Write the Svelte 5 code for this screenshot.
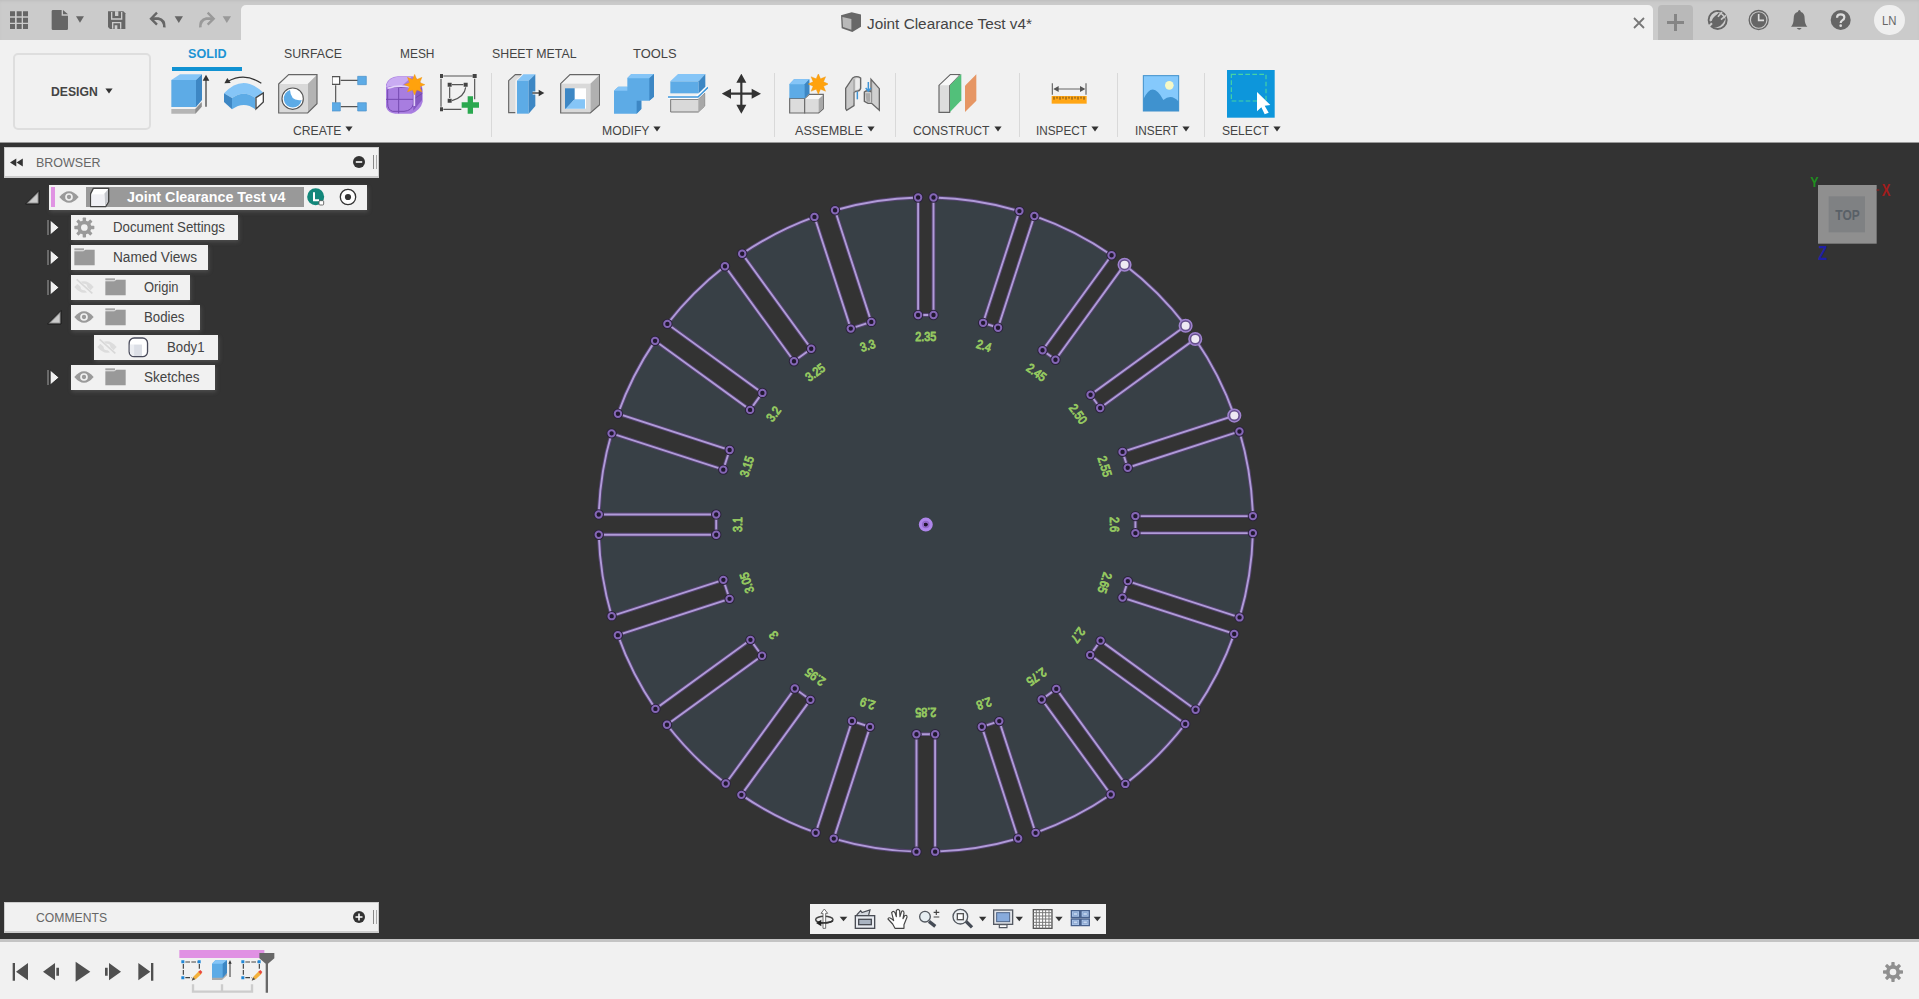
<script>
  // Sketch geometry, in canvas pixels
  const CX = 925.8, CY = 524.6, R = 327.2, INNER = 209.6, SCALE = 6.55;
  const labels = ['2.35', '2.4', '2.45', '2.50', '2.55', '2.6', '2.65', '2.7', '2.75', '2.8',
    '2.85', '2.9', '2.95', '3', '3.05', '3.1', '3.15', '3.2', '3.25', '3.3'];

  function at(deg, x, y) {
    const a = (deg * Math.PI) / 180;
    return [CX + x * Math.cos(a) + y * Math.sin(a), CY + x * Math.sin(a) - y * Math.cos(a)];
  }

  const slots = labels.map((label, i) => {
    const deg = i * 18;
    const h = (parseFloat(label) * SCALE) / 2;
    const top = Math.sqrt(R * R - h * h);
    return {
      label, deg,
      pts: [at(deg, -h, top), at(deg, -h, INNER), at(deg, h, INNER), at(deg, h, top)],
      text: at(deg, 0, 188.3)
    };
  });

  const p = (q) => q[0].toFixed(2) + ' ' + q[1].toFixed(2);
  let outline = 'M' + p(slots[0].pts[0]);
  slots.forEach((s, i) => {
    const next = slots[(i + 1) % slots.length];
    outline += ` L${p(s.pts[1])} L${p(s.pts[2])} L${p(s.pts[3])} A${R} ${R} 0 0 1 ${p(next.pts[0])}`;
  });
  outline += 'Z';

  const picked = [[2, 3], [3, 0], [3, 3], [4, 0]];
  const isPicked = (i, j) => picked.some(([a, b]) => a === i && b === j);
  const points = slots.flatMap((s, i) => s.pts.map((q, j) => ({ q, on: isPicked(i, j) })));

  const dimWidth = { 4: 21, 3: 15, 1: 6.5 };

  const tabs = [
    { s: 'SOLID', w: 38.5, pad: 16 }, { s: 'SURFACE', w: 58, pad: 42 }, { s: 'MESH', w: 34.5, pad: 58 },
    { s: 'SHEET METAL', w: 84.5, pad: 57 }, { s: 'TOOLS', w: 43.5, pad: 56.5 }
  ];

  const groups = [
    { s: 'CREATE', w: 48.5, size: 329, left: 0, icons: ['extrude', 'revolve', 'hole', 'pattern', 'form', 'sketch'] },
    { s: 'MODIFY', w: 47.5, size: 283, left: 7, icons: ['press', 'shell', 'combine', 'split', 'move'] },
    { s: 'ASSEMBLE', w: 68, size: 121, left: 0, icons: ['component', 'joint'] },
    { s: 'CONSTRUCT', w: 76.5, size: 124, left: 0, icons: ['plane'] },
    { s: 'INSPECT', w: 51, size: 98, left: 0, icons: ['measure'] },
    { s: 'INSERT', w: 43, size: 87, left: 0, icons: ['image'] },
    { s: 'SELECT', w: 47, size: 92, left: 0, icons: ['select'] }
  ];

  const rows = [
    { s: 'Document Settings', w: 112, ind: 46.8, size: 167.7, open: false, icons: ['gear'] },
    { s: 'Named Views', w: 84, ind: 46.8, size: 137.7, open: false, icons: ['folder'] },
    { s: 'Origin', w: 34.5, ind: 46.8, size: 119, open: false, icons: ['hidden', 'folder'] },
    { s: 'Bodies', w: 40.5, ind: 46.8, size: 129, open: true, icons: ['eye', 'folder'] },
    { s: 'Body1', w: 37.5, ind: 69.6, size: 124, open: null, icons: ['hidden', 'body'] },
    { s: 'Sketches', w: 55.5, ind: 46.8, size: 144.2, open: false, icons: ['eye', 'folder'] }
  ];

  const star = (cx, cy, ro, ri, n) => Array.from({ length: n * 2 }, (_, k) => {
    const a = (k * Math.PI) / n - Math.PI / 2, r = k % 2 ? ri : ro;
    return (cx + r * Math.cos(a)).toFixed(1) + ',' + (cy + r * Math.sin(a)).toFixed(1);
  }).join(' ');
</script>

{#snippet txt(s, w, size, cls)}
  <svg class="t {cls}" width={w} height="18">
    <text x="0" y={9 + size * 0.36} font-size={size} textLength={w} lengthAdjust="spacingAndGlyphs">{s}</text>
  </svg>
{/snippet}

{#snippet caret()}
  <svg class="caret" width="8" height="6" viewBox="0 0 8 6"><path d="M.4 .5H7.6L4 5.6Z" fill="#333" /></svg>
{/snippet}

{#snippet gearShape(fill)}
  <g transform="translate(256 261)" {fill}>
    {#each [0, 45, 90, 135, 180, 225, 270, 315] as a}
      <rect x="-5" y="-30" width="10" height="14" rx="2" transform="rotate({a})" />
    {/each}
    <path fill-rule="evenodd" d="M-21 0A21 21 0 1 1 21 0A21 21 0 1 1-21 0ZM-10 0A10 10 0 1 0 10 0A10 10 0 1 0-10 0Z" />
  </g>
{/snippet}

{#snippet tool(n)}
  {#if n === 'extrude'}
    <svg class="i40" viewBox="510 222 120 120">
      <path d="M514 327H586L605 308V320L586 341H514Z" fill="#b5b5b5" /><path d="M586 327L605 306V320L586 341Z" fill="#8d8d8d" />
      <path d="M514 240L540 223H606L588 240Z" fill="#85c5f7" /><path d="M514 240H588V321H514Z" fill="#5dabe6" />
      <path d="M588 240L606 223V300L588 321Z" fill="#3d87c4" />
      <path d="M618 320V234" stroke="#333" stroke-width="3.5" /><path d="M618 224L628 242H608Z" fill="#333" />
    </svg>
  {:else if n === 'revolve'}
    <svg class="i40" viewBox="672 222 120 120">
      <path d="M672 280Q730 218 792 280L766 294Q732 268 696 294Z" fill="#85c5f7" />
      <path d="M672 280L696 294V328L672 306Z" fill="#3d87c4" /><path d="M696 294Q732 268 766 294V328Q732 302 696 328Z" fill="#5dabe6" />
      <path d="M768 293L790 279V306L768 327Z" fill="#fff" stroke="#444" stroke-width="4" />
      <path d="M684 244Q734 216 784 250" fill="none" stroke="#333" stroke-width="3.5" /><path d="M673 250L682 234L692 249Z" fill="#333" />
    </svg>
  {:else if n === 'hole'}
    <svg class="i40" viewBox="834 222 120 120">
      <path d="M836 252L866 224H951L923 252Z" fill="#f4f4f4" /><path d="M923 252L951 224V311L923 339Z" fill="#b3b3b3" />
      <path d="M836 252H923V339H836Z" fill="#d9d9d9" />
      <path d="M836 252L866 224H951V311L923 339H836Z" fill="none" stroke="#666" stroke-width="3.5" />
      <circle cx="878" cy="296" r="32" fill="#fff" stroke="#555" stroke-width="3.5" />
      <path d="M870 270A27 27 0 1 0 905 300Q872 305 870 270Z" fill="#5dabe6" />
    </svg>
  {:else if n === 'pattern'}
    <svg class="i40" viewBox="996 222 120 120">
      <path d="M1022 241H1074M1007 256V308M1022 320H1074" stroke="#555" stroke-width="3.5" />
      <rect x="996" y="230" width="23" height="23" fill="#fff" stroke="#444" stroke-width="3.5" />
      <path d="M1073 229H1099V254H1073ZM994 308H1021V333H994ZM1073 308H1099V333H1073Z" fill="#5dabe6" stroke="#4a90c8" stroke-width="2" />
    </svg>
  {:else if n === 'form'}
    <svg class="i40" viewBox="1158 222 120 120">
      <path d="M1156 262Q1160 232 1194 229H1238Q1266 240 1268 270V305Q1262 330 1234 341H1186Q1158 338 1156 310Z" fill="#a87de0" />
      <path d="M1158 262Q1162 233 1194 230H1236Q1220 244 1204 259H1170Z" fill="#c9abf2" />
      <path d="M1240 275L1266 262V300L1240 332Z" fill="#8559c2" />
      <path d="M1157 298H1240L1267 280M1196 259V340M1168 262H1240V312Q1236 332 1212 334H1178Q1163 330 1163 310V270Z" fill="none" stroke="#7549b0" stroke-width="3" />
      <path d="M1163 265Q1200 252 1243 264V318" fill="none" stroke="#e3d3fa" stroke-width="5" />
      <polygon points={star(1244, 254, 31, 17, 8)} fill="#ffa20d" stroke="#e69312" stroke-width="1" />
    </svg>
  {:else if n === 'sketch'}
    <svg class="i40" viewBox="1320 222 120 120">
      <path d="M1330 228H1418M1323 236V320M1424 236V298M1330 328H1384M1349 262V294M1356 254H1390M1397 262Q1394 290 1356 302" fill="none" stroke="#555" stroke-width="3.5" />
      <path d="M1317 222h12v12h-12zM1418 222h12v12h-12zM1317 322h12v12h-12zM1343 248h12v12h-12zM1391 248h12v12h-12zM1343 296h12v12h-12z" fill="#444" />
      <path d="M1403 289H1419V307H1437V323H1419V341H1403V323H1385V307H1403Z" fill="#2aa84f" />
    </svg>
  {:else if n === 'press'}
    <svg class="i40" viewBox="78 102 120 120">
      <path d="M86 122L106 104H126L112 122V218H86Z" fill="#ddd" stroke="#666" stroke-width="3.5" />
      <path d="M106 222V122L128 100H136V222Z" fill="#f1f1f1" />
      <path d="M111 122L130 103H166L146 122Z" fill="#85c5f7" /><path d="M111 122H146V221H111Z" fill="#5dabe6" /><path d="M146 122L166 103V198L146 221Z" fill="#3d87c4" />
      <path d="M158 159H178" stroke="#fff" stroke-width="9" /><path d="M157 159H182" stroke="#333" stroke-width="4" /><path d="M176 149L193 159L176 169Z" fill="#333" />
    </svg>
  {:else if n === 'shell'}
    <svg class="i40" viewBox="240 102 120 120">
      <path d="M242 131L270 104H359L331 131Z" fill="#f4f4f4" /><path d="M331 131L359 104V194L331 219Z" fill="#b0b0b0" />
      <path d="M242 131H331V219H242Z" fill="#d9d9d9" /><path d="M242 131L270 104H359V194L331 219H242Z" fill="none" stroke="#666" stroke-width="3.5" />
      <path d="M255 145H318V206H255Z" fill="#fff" /><path d="M255 145H284V178L258 206H255Z" fill="#3d87c4" /><path d="M284 178H315V206H257Z" fill="#85c5f7" />
    </svg>
  {:else if n === 'combine'}
    <svg class="i40" viewBox="402 102 120 120">
      <path d="M402 152L415 140H442V114L454 102H522V170L508 182H484V207L470 221H402Z" fill="#5dabe6" />
      <path d="M402 152L415 140H442V152ZM442 115L454 102H522L508 115Z" fill="#85c5f7" />
      <path d="M508 115L522 102V170L508 182ZM470 182H484V207L470 221Z" fill="#3d87c4" />
    </svg>
  {:else if n === 'split'}
    <svg class="i40" viewBox="564 102 120 120">
      <path d="M572 178H655L674 160V198L655 216H572Z" fill="#d9d9d9" stroke="#777" stroke-width="3" /><path d="M655 178L674 160V198L655 216Z" fill="#a8a8a8" />
      <path d="M562 172H650L684 142" fill="none" stroke="#fff" stroke-width="10" />
      <path d="M571 124L594 102H676L656 124Z" fill="#85c5f7" /><path d="M571 124H656V160H571Z" fill="#5dabe6" /><path d="M656 124L676 102V140L656 160Z" fill="#3d87c4" />
      <path d="M562 171H654L684 142" fill="none" stroke="#3f97db" stroke-width="4.5" />
    </svg>
  {:else if n === 'move'}
    <svg class="i40" viewBox="726 102 120 120">
      <path d="M784 125V197M748 161H820" stroke="#333" stroke-width="6.5" />
      <path d="M784 101L799 128H769ZM784 221L769 194H799ZM725 161L753 146V176ZM843 161L815 176V146Z" fill="#333" />
    </svg>
  {:else if n === 'component'}
    <svg class="i40" viewBox="924 102 120 120">
      <path d="M929 175H974V219H929Z" fill="#dcdcdc" stroke="#6b6b6b" stroke-width="3.5" />
      <path d="M974 176L988 163H1030V206L1016 219H974Z" fill="#dcdcdc" stroke="#6b6b6b" stroke-width="3.5" />
      <path d="M976 177L989 165H1028L1016 177Z" fill="#f7f7f7" /><path d="M1016 178L1029 166V205L1016 217Z" fill="#a9a9a9" />
      <path d="M928 133L942 118H988V160L974 175H928Z" fill="#5dabe6" /><path d="M928 133L942 118H988L974 133Z" fill="#85c5f7" /><path d="M974 133L988 118V160L974 175Z" fill="#3d87c4" />
      <polygon points={star(1015, 132, 31, 17, 8)} fill="#ffa20d" stroke="#e69312" stroke-width="1" />
    </svg>
  {:else if n === 'joint'}
    <svg class="i40" viewBox="1086 102 120 120">
      <path d="M1097 145L1118 114Q1130 106 1142 114V145Q1140 154 1127 154L1122 158V197L1100 211L1097 206Z" fill="#c9c9c9" stroke="#666" stroke-width="4" />
      <path d="M1122 118V190" stroke="#999" stroke-width="3" /><path d="M1126 116Q1132 112 1139 116V143Q1134 151 1126 150Z" fill="#ececec" />
      <path d="M1132 155V178" fill="none" stroke="#4095d6" stroke-width="4.5" />
      <path d="M1153 156Q1162 149 1173 155V118L1198 146V211L1175 190H1164L1153 184Z" fill="#d0d0d0" stroke="#666" stroke-width="4" />
      <path d="M1175 126V188" stroke="#888" stroke-width="3" /><path d="M1156 160H1170V185H1160Z" fill="#aaa" />
      <path d="M1165 126V150M1157 144L1165 153L1173 144" fill="none" stroke="#4095d6" stroke-width="4.5" />
    </svg>
  {:else if n === 'plane'}
    <svg class="i40" viewBox="475 222 120 120">
      <path d="M478 256L512 224H540L510 256V337H478Z" fill="#dcdcdc" stroke="#666" stroke-width="3.5" /><path d="M481 256L513 226H538L509 256Z" fill="#f8f8f8" />
      <path d="M511 256L545 222V301L511 336Z" fill="#52c07a" /><path d="M556 257L590 223V302L556 336Z" fill="#e69664" />
    </svg>
  {:else if n === 'measure'}
    <svg class="i40" viewBox="807 222 120 120">
      <path d="M817 250V284M918 250V284M824 267H912" stroke="#666" stroke-width="3.5" /><path d="M820 267L836 258V276ZM916 267L900 276V258Z" fill="#555" />
      <rect x="815" y="288" width="105" height="23" fill="#ffa615" />
      <path d="M822 290v9M831 290v6M840 290v9M849 290v6M858 290v9M867 290v6M876 290v9M885 290v6M894 290v9M903 290v6M912 290v9" stroke="#6b4a14" stroke-width="3" />
    </svg>
  {:else if n === 'image'}
    <svg class="i40" viewBox="1083 222 120 120">
      <rect x="1090" y="227" width="106" height="106" fill="#85c9fc" stroke="#3f8fcb" stroke-width="3" />
      <path d="M1090 298Q1118 238 1150 300Q1174 280 1196 305V333H1090Z" fill="#3f92cf" /><circle cx="1168" cy="256" r="13" fill="#f5f8c6" />
    </svg>
  {:else}
    <svg class="i48" viewBox="1343 210 143 143">
      <rect x="1343" y="210" width="143" height="143" fill="#0d96db" />
      <rect x="1356" y="223" width="104" height="80" fill="none" stroke="#46d3a4" stroke-width="3.5" stroke-dasharray="14 7" />
      <path d="M1433 276L1473 315L1456 317L1468 338L1456 343L1446 322L1433 334Z" fill="#fff" />
    </svg>
  {/if}
{/snippet}

{#snippet eye()}
  <svg width="20" height="18" viewBox="226 234 60 54">
    <path d="M227 261Q256 226 285 261Q256 296 227 261Z" fill="#9a9a9a" /><circle cx="256" cy="261" r="11.5" fill="#f1f1f1" /><circle cx="256" cy="261" r="6.5" fill="#9a9a9a" />
  </svg>
{/snippet}

{#snippet rowIcon(n)}
  {#if n === 'gear'}
    <svg width="20.7" height="21" viewBox="225 230 62 62">{@render gearShape('#9a9a9a')}</svg>
  {:else if n === 'folder'}
    <svg width="20.7" height="20" viewBox="318 411 62 60"><path d="M319 424H346L352 419H380V466H319Z" fill="#999" /><rect x="319" y="415" width="29" height="6" fill="#a5a5a5" /></svg>
  {:else if n === 'eye'}
    {@render eye()}
  {:else if n === 'hidden'}
    <svg width="20" height="18" viewBox="226 414 60 54">
      <path d="M227 441Q256 406 285 441Q256 476 227 441Z" fill="#dcdcdc" /><circle cx="256" cy="441" r="10" fill="#f1f1f1" />
      <path d="M232 420L280 462" stroke="#f1f1f1" stroke-width="12" /><path d="M234 418L281 460" stroke="#d8d8d8" stroke-width="5" />
    </svg>
  {:else}
    <svg width="20.7" height="21" viewBox="386 589 62 64">
      <rect x="389" y="592" width="56" height="57" rx="15" fill="#fff" stroke="#4a4c5c" stroke-width="4" />
      <path d="M391 612H404V646H398Q391 642 391 634Z" fill="#eceef2" /><path d="M404 612H428V647H404Z" fill="#dcdfe6" />
    </svg>
  {/if}
{/snippet}

<div class="app">
  <header class="titlebar">
    <div class="quick">
      <svg width="36.7" height="40" viewBox="0 0 110 120"><path d="M30 34h15v15h-15zM50 34h15v15h-15zM69 34h15v15h-15zM30 53h15v15h-15zM50 53h15v15h-15zM69 53h15v15h-15zM30 72h15v15h-15zM50 72h15v15h-15zM69 72h15v15h-15z" fill="#666" /></svg>
      <svg width="53.3" height="40" viewBox="110 0 160 120"><path d="M154 34Q154 30 158 30H184V47H203V86Q203 90 199 90H158Q154 90 154 86ZM188 30L203 43H188Z" fill="#666" /><path d="M227 49H251L239 68Z" fill="#666" /></svg>
      <svg width="46.7" height="40" viewBox="270 0 140 120"><path d="M324 34H370L376 40V87H330L324 81Z" fill="#666" /><path d="M335 36V57H365V36M338 86V68H362V86" fill="none" stroke="#ccc" stroke-width="4" /><path d="M345 34H355V48H345ZM344 76H352V87H344Z" fill="#ccc" /></svg>
      <svg width="53.3" height="40" viewBox="410 0 160 120"><path d="M453 56H474Q493 60 492 82" fill="none" stroke="#666" stroke-width="8" /><path d="M470 38L452 56L470 74" fill="none" stroke="#666" stroke-width="7" /><path d="M523 49H548L535.5 69Z" fill="#666" /></svg>
      <svg width="50" height="40" viewBox="570 0 150 120"><path d="M640 56H619Q600 60 601 82" fill="none" stroke="#999" stroke-width="8" /><path d="M623 38L641 56L623 74" fill="none" stroke="#999" stroke-width="7" /><path d="M668 49H693L680.5 69Z" fill="#999" /></svg>
    </div>
    <div class="doctab">
      <svg class="docicon" width="20.7" height="20" viewBox="183 37 62 60"><path d="M183 47L215 38L245 45V80L217 97L185 86Z" fill="#686868" /><path d="M187 52L214 58V90L189 82Z" fill="#b9b9b9" /></svg>
      {@render txt('Joint Clearance Test v4*', 165, 15.5, 'dark title')}
      <svg class="close" width="12" height="12" viewBox="0 0 12 12"><path d="M1 1L11 11M11 1L1 11" stroke="#777" stroke-width="1.8" /></svg>
    </div>
    <div class="plus"><svg width="17" height="17" viewBox="0 0 17 17"><path d="M8.5 0V17M0 8.5H17" stroke="#858585" stroke-width="3" /></svg></div>
    <div class="status">
      <svg width="38.3" height="40" viewBox="300 0 115 120">
        <circle cx="353" cy="60" r="27" fill="none" stroke="#666" stroke-width="6" /><path d="M340 84Q324 74 334 58L356 38Q368 44 376 58Q364 84 340 84Z" fill="#666" />
        <path d="M354 50L366 36M363 59L378 46" stroke="#ccc" stroke-width="5" /><path d="M322 84L336 70" stroke="#ccc" stroke-width="6" /><path d="M332 62Q336 46 352 38" fill="none" stroke="#ccc" stroke-width="7" />
      </svg>
      <svg width="41.7" height="40" viewBox="415 0 125 120"><circle cx="477" cy="60" r="28.5" fill="none" stroke="#666" stroke-width="4" /><circle cx="477" cy="60" r="23" fill="#666" /><path d="M477 42V61H493" fill="none" stroke="#ddd" stroke-width="5" /></svg>
      <svg width="40" height="40" viewBox="540 0 120 120"><path d="M576 80Q584 72 584 56Q584 38 596 36Q601 24 606 36Q617 39 617 56Q617 72 625 80Z" fill="#666" /><path d="M593 84H608Q601 94 593 84Z" fill="#666" /></svg>
      <svg width="41.7" height="40" viewBox="660 0 125 120"><circle cx="725" cy="60" r="30" fill="#666" /><path d="M714 53Q714 43 725 43Q736 43 736 52Q736 58 730 61Q725 64 725 69" fill="none" stroke="#ddd" stroke-width="6.5" /><circle cx="725" cy="77" r="4" fill="#ddd" /></svg>
      <div class="avatar">{@render txt('LN', 14.5, 13.5, 'mid')}</div>
    </div>
  </header>

  <section class="ribbon">
    <div class="design">{@render txt('DESIGN', 46.7, 13.5, 'dark bold')}{@render caret()}</div>
    <div class="work">
      <nav class="tabs">
        {#each tabs as tab, i}
          <div class="tab" class:active={i === 0} style:padding-left="{tab.pad}px">{@render txt(tab.s, tab.w, 13.5, i ? 'dark' : 'blue bold')}</div>
        {/each}
      </nav>
      <div class="groups">
        {#each groups as g}
          <div class="group {g.s.toLowerCase()}" class:wide={g.icons.length > 2} style:width="{g.size}px" style:padding-left="{g.left}px">
            <div class="icons">
              {#each g.icons as n}<div class="cell">{@render tool(n)}</div>{/each}
            </div>
            <div class="glabel">{@render txt(g.s, g.w, 13.5, 'dark')}{@render caret()}</div>
          </div>
        {/each}
      </div>
    </div>
  </section>

  <main class="view">
    <svg class="canvas" viewBox="0 143 1919 796">
      <path d={outline} fill="#384046" stroke="#54436f" stroke-width="3.8" />
      <path d={outline} fill="none" stroke="#b09bd8" stroke-width="1.9" />
      {#each points as pt}
        {#if pt.on}
          <circle cx={pt.q[0]} cy={pt.q[1]} r="6.3" fill="#65508c" stroke="#a083cf" stroke-width="1.5" /><circle cx={pt.q[0]} cy={pt.q[1]} r="4" fill="#eeeaf3" />
        {:else}
          <circle cx={pt.q[0]} cy={pt.q[1]} r="5.2" fill="#2b223b" /><circle cx={pt.q[0]} cy={pt.q[1]} r="3.2" fill="#211830" stroke="#8466b5" stroke-width="2" />
        {/if}
      {/each}
      <circle cx={CX} cy={CY} r="4.6" fill="#21152f" stroke="#ae85ea" stroke-width="4.8" /><circle cx={CX} cy={CY} r="3" fill="none" stroke="#9168c8" stroke-width="1.5" />
      {#each slots as s}
        <text class="dim" x="0" y="4.4" transform="translate({s.text[0]} {s.text[1]}) rotate({s.deg})" textLength={dimWidth[s.label.length]} lengthAdjust="spacingAndGlyphs">{s.label}</text>
      {/each}
    </svg>

    <aside class="browser">
      <div class="panel-head">
        <svg width="13" height="9" viewBox="0 0 13 9"><path d="M6.3 .5V8.5L0 4.5ZM12.8 .5V8.5L6.5 4.5Z" fill="#333" /></svg>
        {@render txt('BROWSER', 64.5, 13.5, 'mid')}
        <svg class="knob" width="12" height="12" viewBox="0 0 12 12"><circle cx="6" cy="6" r="6" fill="#333" /><path d="M2.8 6H9.2" stroke="#fff" stroke-width="1.6" /></svg>
        <i class="grip"></i>
      </div>
      <div class="row root" style:padding-left="25px">
        <div class="arrow"><svg width="15" height="15" viewBox="0 0 15 15"><path d="M14 .5V14H.5Z" fill="#999" stroke="#191919" /><path d="M12.5 4V12.5H4Z" fill="#ccc" /></svg></div>
        <div class="chip" style:width="317.6px">
          <i class="pink"></i>
          {@render eye()}
          <div class="sel">
            <svg width="20" height="21" viewBox="271 140 60 63"><path d="M273 160L281 144H327V184L318 199H273Z" fill="#fff" stroke="#444" stroke-width="4" stroke-linejoin="round" /><path d="M314 160L325 147V183L316 197Z" fill="#c5c7cc" /><path d="M275 162H314V197H275Z" fill="#f0f0f4" /></svg>
            {@render txt('Joint Clearance Test v4', 158.5, 14.5, 'white bold')}
          </div>
          <svg width="18" height="18" viewBox="923 144 54 54"><circle cx="949" cy="170" r="25.5" fill="#12877a" /><path d="M944 157V181H959" fill="none" stroke="#fff" stroke-width="6" /><rect x="959" y="182" width="14" height="13" rx="3" fill="#fff" stroke="#555" stroke-width="2.5" /></svg>
          <svg class="radio" width="18" height="18" viewBox="0 0 18 18"><circle cx="9" cy="9" r="7.7" fill="#fff" stroke="#333" stroke-width="1.3" /><circle cx="9" cy="9" r="3.1" fill="#333" /></svg>
        </div>
      </div>
      {#each rows as r}
        <div class="row" style:padding-left="{r.ind}px">
          <div class="arrow">
            {#if r.open === true}
              <svg width="15" height="15" viewBox="0 0 15 15"><path d="M14 .5V14H.5Z" fill="#999" stroke="#191919" /><path d="M12.5 4V12.5H4Z" fill="#ccc" /></svg>
            {:else if r.open === false}
              <svg width="14" height="17" viewBox="0 0 14 17"><path d="M1 1V16" stroke="#888" stroke-width="1.3" /><path d="M3.2 1L12 8.500L3.2 16Z" fill="#f1f1f1" stroke="#1d1d1d" stroke-width=".8" /></svg>
            {/if}
          </div>
          <div class="chip" style:width="{r.size}px">
            {#each r.icons as n}<div class="ri">{@render rowIcon(n)}</div>{/each}
            <div class="name">{@render txt(r.s, r.w, 14, 'dark')}</div>
          </div>
        </div>
      {/each}
    </aside>

    <div class="cube">
      <svg width="90" height="92" viewBox="624 519 270 276">
        <rect x="654" y="555" width="176" height="176" fill="#8f8f8f" /><rect x="686" y="589" width="109" height="108" fill="#7f8183" />
        <path d="M830 570H838" stroke="#8c2020" stroke-width="4" />
        <text x="706" y="659" font-size="46" font-weight="bold" fill="#596067" textLength="73" lengthAdjust="spacingAndGlyphs">TOP</text>
        <text x="631" y="560" font-size="46" fill="#1f8f1f" textLength="25" lengthAdjust="spacingAndGlyphs" font-weight="bold">Y</text>
        <text x="845" y="589" font-size="50" fill="#a31c1c" textLength="26" lengthAdjust="spacingAndGlyphs" font-weight="bold">X</text>
        <text x="655" y="779" font-size="58" fill="#1f1fa6" textLength="27" lengthAdjust="spacingAndGlyphs" font-weight="bold">Z</text>
      </svg>
    </div>

    <div class="panel-head comments">
      {@render txt('COMMENTS', 71, 13.5, 'mid')}
      <svg class="knob" width="12" height="12" viewBox="0 0 12 12"><circle cx="6" cy="6" r="6" fill="#333" /><path d="M2.5 6H9.5M6 2.5V9.5" stroke="#fff" stroke-width="1.6" /></svg>
      <i class="grip"></i>
    </div>

    <div class="navbar">
      <svg width="40" height="30" viewBox="60 42 120 90"><ellipse cx="103" cy="89" rx="26" ry="10" fill="none" stroke="#444" stroke-width="4.5" /><path d="M99 115V70H93L103 57L113 70H107V115Z" fill="#fff" stroke="#555" stroke-width="2.5" /><path d="M128 92Q124 98 92 99" fill="none" stroke="#333" stroke-width="5" /><path d="M94 89V109L78 99Z" fill="#222" /><path d="M149 80H172L160.5 94Z" fill="#333" /></svg>
      <svg width="30" height="30" viewBox="180 42 90 90"><rect x="196" y="77" width="58" height="38" fill="#e8ebf0" stroke="#4a4d55" stroke-width="4" /><rect x="206" y="88" width="38" height="16" fill="#aab4c2" stroke="#4a4d55" stroke-width="4" /><path d="M200 75L212 62L216 68L240 60L236 75" fill="#d6dae0" stroke="#4a4d55" stroke-width="3.5" /></svg>
      <svg width="33.3" height="30" viewBox="270 42 100 90"><path d="M315 115L308 102L294 87Q296 80 304 86L311 92L305 68Q310 60 315 68L319 80V62Q324 54 329 62L330 80L335 64Q342 60 342 70L339 86L344 77Q352 73 351 82L342 104V115Z" fill="#fff" stroke="#454545" stroke-width="3.5" stroke-linejoin="round" /></svg>
      <svg width="33.3" height="30" viewBox="370 42 100 90"><path d="M418 94L437 109" stroke="#454b55" stroke-width="10" /><circle cx="406" cy="80" r="16" fill="#e6eef2" stroke="#53585f" stroke-width="4" /><path d="M440 59V75M432 67H449M432 81H449" stroke="#444" stroke-width="3.5" /></svg>
      <svg width="41.7" height="30" viewBox="470 42 125 90"><path d="M527 94L545 112" stroke="#454b55" stroke-width="10" /><circle cx="510" cy="80" r="22" fill="#eef1f4" stroke="#53585f" stroke-width="4" /><rect x="501" y="71" width="18" height="18" fill="#fff" stroke="#555" stroke-width="4" /><path d="M566 80H588L577 94Z" fill="#333" /></svg>
      <svg width="38.3" height="30" viewBox="595 42 115 90"><rect x="612" y="60" width="57" height="43" fill="#e4e6ea" stroke="#555a63" stroke-width="4" /><rect x="621" y="68" width="39" height="27" fill="#88abdc" stroke="#4f6487" stroke-width="3" /><path d="M629 104H652V113H629Z" fill="#fff" stroke="#555a63" stroke-width="3.5" /><path d="M678 80H700L689 94Z" fill="#333" /></svg>
      <svg width="38.3" height="30" viewBox="710 42 115 90"><rect x="729" y="59" width="56" height="56" fill="#fff" stroke="#555" stroke-width="4" /><path d="M738 59V115M747 59V115M757 59V115M766 59V115M776 59V115M729 68H785M729 78H785M729 87H785M729 97H785M729 106H785" stroke="#777" stroke-width="3" /><path d="M795 80H817L806 94Z" fill="#333" /></svg>
      <svg width="41" height="30" viewBox="825 42 123 90"><path d="M844 62H869V82H844ZM873 62H898V82H873ZM844 87H869V107H844ZM873 87H898V107H873Z" fill="#a9c3e8" stroke="#48618d" stroke-width="4" /><path d="M850 68H863V76H850ZM879 68H892V76H879ZM850 93H863V101H850ZM879 93H892V101H879Z" fill="#c4d6f0" stroke="#7795c4" stroke-width="2" /><path d="M911 80H933L922 94Z" fill="#333" /></svg>
    </div>
  </main>

  <footer class="timeline">
    <svg width="35" height="57" viewBox="0 156 105 171"><path d="M38 219h7v53h-7zM84 219V271L48 245Z" fill="#505050" /></svg>
    <svg width="31.7" height="57" viewBox="105 156 95 171"><path d="M165 219V271L129 245ZM169 233h8v24h-8z" fill="#505050" /></svg>
    <svg width="28.3" height="57" viewBox="200 156 85 171"><path d="M226 215V275L270 245Z" fill="#505050" /></svg>
    <svg width="36.7" height="57" viewBox="285 156 110 171"><path d="M315 233h8v24h-8zM327 219V271L363 245Z" fill="#505050" /></svg>
    <svg width="45" height="57" viewBox="395 156 135 171"><path d="M414 219V271L450 245ZM452 219h7v53h-7z" fill="#505050" /></svg>
    <svg width="106.7" height="57" viewBox="530 156 320 171">
      <rect x="537" y="180" width="255" height="24" fill="#e091e3" />
      {#each [0, 180] as dx}
        <g transform="translate({dx} 0)">
          <path d="M555 216H593M549 222V258M555 263H574M597 222V238" stroke="#444" stroke-width="3.5" stroke-dasharray="14 4" />
          <path d="M543 211h9v9h-9zM592 211h9v9h-9zM543 259h9v9h-9z" fill="#1f86d6" />
          <path d="M575 271L579 260L596 243L604 251L587 267Z" fill="#f3b13d" /><path d="M594 245L600 240L606 246L601 253Z" fill="#e8493f" /><path d="M574 272L578 262L585 268Z" fill="#555" />
        </g>
      {/each}
      <path d="M635 260H665L680 248V256L665 270H635Z" fill="#aaa" /><path d="M635 221L645 211H680V248L667 263H635Z" fill="#5dabe6" /><path d="M635 221L645 211H680L667 221Z" fill="#85c5f7" /><path d="M667 221L680 211V248L667 263Z" fill="#3d87c4" />
      <path d="M689 261V218" stroke="#333" stroke-width="3" /><path d="M689 210L694 221H684Z" fill="#333" />
      <path d="M578 283V305H755V283M665 283V305" fill="none" stroke="#ccc" stroke-width="7" />
      <path d="M777 189H822V205L803 221V308H796V221L777 205Z" fill="#686868" />
    </svg>
    <svg class="cog" width="22" height="22" viewBox="223 228 66 66">{@render gearShape('#909090')}</svg>
  </footer>
</div>

<style>
  :global(body) { background: #333; overflow: hidden; }
  .app { width: 1919px; height: 999px; display: flex; flex-direction: column; font-family: "Liberation Sans", Arial, sans-serif; background: #f1f1f1; }
  svg { display: block; flex: none; }
  .t { overflow: visible; }
  .dark text { fill: #444; }
  .mid text { fill: #666; }
  .blue text { fill: #1c94d4; }
  .white text { fill: #fff; }
  .bold text { font-weight: bold; }

  .titlebar { height: 40px; display: flex; background: #cbcbcb; box-shadow: inset 0 2px 3px -1px #bdbdbd; }
  .quick { display: flex; width: 240.5px; }
  .doctab { width: 1412px; box-sizing: border-box; margin-top: 5px; background: #f1f1f1; border-radius: 5px 5px 0 0; display: flex; align-items: center; padding: 0 8px 0 600px; }
  .docicon { margin-top: -1px; }
  .title { margin: 0 0 0 6px; }
  .close { margin: 0 0 0 auto; }
  .plus { width: 35px; margin: 5px 0 0 5px; background: #b9b9b9; border-radius: 4px 4px 0 0; display: flex; align-items: center; justify-content: center; }
  .status { display: flex; align-items: center; margin-left: 7px; }
  .avatar { width: 30.5px; height: 30.5px; border-radius: 50%; background: #efefef; display: flex; align-items: center; justify-content: center; margin-left: 13px; }

  .ribbon { height: 102px; display: flex; border-bottom: 1px solid #999; }
  .design { box-sizing: border-box; width: 138px; height: 77px; margin: 12.5px 0 0 13px; border: 2px solid #dedede; border-radius: 5px; display: flex; align-items: center; justify-content: center; gap: 7px; }
  .work { display: flex; flex-direction: column; margin-left: 12px; }
  .tabs { display: flex; height: 30px; padding-left: 9px; }
  .tab { height: 27px; padding-top: 4px; box-sizing: border-box; }
  .tab.active { width: 70px; height: 31px; border-bottom: 4px solid #1192d2; }
  .groups { display: flex; padding-top: 3px; height: 64px; }
  .group { box-sizing: border-box; height: 64px; border-right: 1px solid #d9d9d9; display: flex; flex-direction: column; align-items: center; }
  .group:last-child { border: 0; }
  .group.wide { align-items: flex-start; }
  .icons { display: flex; height: 42px; align-items: center; flex: none; }
  .cell { width: 54px; display: flex; justify-content: center; }
  .i40 { width: 40px; height: 40px; }
  .i48 { width: 47.7px; height: 47.7px; }
  .glabel { display: flex; align-items: center; gap: 4px; height: 18px; margin-top: 5.5px; flex: none; }
  .glabel .caret { margin-top: -2px; }
  .wide .glabel { align-self: center; margin-left: -8px; }
  .modify .glabel { margin-left: -10px; }
  .inspect .glabel { margin-left: -2px; }
  .insert .glabel { margin-left: 2px; }

  .view { position: relative; height: 796px; background: #333; }
  .canvas { width: 1919px; height: 796px; }
  .dim { font-size: 12.5px; fill: #a9d873; stroke: #93c75f; stroke-width: .9px; text-anchor: middle; }
  .browser { position: absolute; left: 4px; top: 4px; width: 375px; }
  .panel-head { height: 31px; box-sizing: border-box; background: #f1f1f1; border: 1px solid #ccc; border-bottom-width: 2px; display: flex; align-items: center; padding-left: 5px; gap: 12.5px; }
  .knob { margin-left: auto; }
  .grip { width: 2px; height: 14px; border-left: 1px solid #888; border-right: 1px solid #aaa; margin: 0 1px 0 -4px; }
  .row { height: 30px; display: flex; align-items: center; margin-left: -4px; }
  .root { margin-top: 4.5px; }
  .arrow { width: 24px; flex: none; }
  .chip { height: 25.4px; box-sizing: border-box; background: #f1f1f1; display: flex; align-items: center; box-shadow: 1px 2px 4px rgba(130, 130, 130, .35); padding-left: 3.7px; }
  .ri { width: 31px; flex: none; }
  .name { margin-left: 7.3px; }
  .root .chip { padding-left: 2.3px; }
  .pink { width: 4px; height: 20px; background: #e093e3; margin-right: 4px; }
  .sel { width: 217.5px; height: 20px; background: #999; margin: 0 3.5px 0 7px; display: flex; align-items: center; gap: 17.5px; padding-left: 3.5px; box-sizing: border-box; }
  .radio { margin-left: 14px; }
  .cube { position: absolute; left: 1808px; top: 30px; }
  .comments { position: absolute; left: 4px; top: 759px; width: 375px; padding-left: 30.5px; }
  .navbar { position: absolute; left: 810px; top: 761px; width: 296px; height: 30px; background: #f1f1f1; display: flex; }

  .timeline { height: 57px; border-top: 3px solid #c4c4c4; display: flex; align-items: center; background: #f1f1f1; }
  .cog { margin: 3px 15px 0 auto; }
</style>
